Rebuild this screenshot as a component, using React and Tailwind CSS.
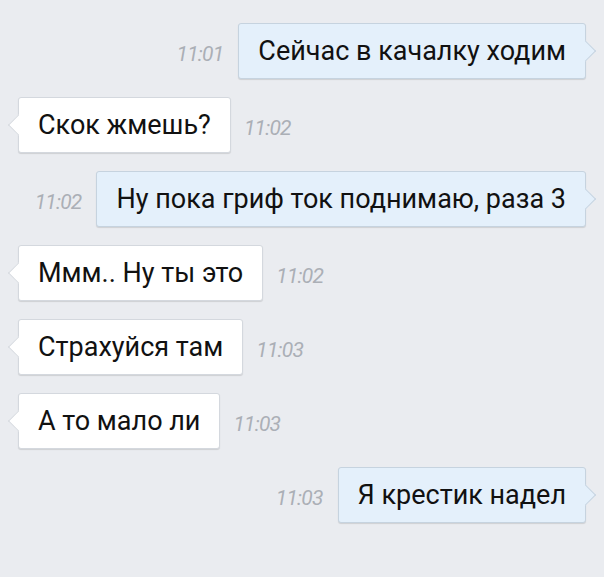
import React from 'react';

const MESSAGES = [
  { out: true, text: 'Сейчас в качалку ходим', time: '11:01' },
  { out: false, text: 'Скок жмешь?', time: '11:02' },
  { out: true, text: 'Ну пока гриф ток поднимаю, раза 3', time: '11:02' },
  { out: false, text: 'Ммм.. Ну ты это', time: '11:02' },
  { out: false, text: 'Страхуйся там', time: '11:03' },
  { out: false, text: 'А то мало ли', time: '11:03' },
  { out: true, text: 'Я крестик надел', time: '11:03' },
];

const Time = ({ children }) => (
  <span className="pt-[7px] text-[21px] italic tracking-[-0.8px] text-[#abafb6]">{children}</span>
);

const Bubble = ({ out, children }) => (
  <div className={`relative h-[56px] flex items-center px-[19px] rounded-[3px] border shadow-[0_1px_1px_rgba(0,0,0,0.12)]
    ${out ? 'bg-[#e4f0fb] border-[#c6d3df]' : 'bg-white border-[#d4d8de]'}`}>
    {/* tail */}
    <span className={`absolute top-1/2 w-[15px] h-[15px] -translate-y-1/2 rotate-45 border
      ${out ? 'right-[-8px] bg-[#e4f0fb] border-[#c6d3df] border-l-0 border-b-0' : 'left-[-8px] bg-white border-[#d4d8de] border-r-0 border-t-0'}`} />
    <span className="relative text-[27px] text-[#111] leading-none">{children}</span>
  </div>
);

export default function App() {
  return (
    <div className="w-[604px] h-[577px] bg-[#eaecf0] pt-[23px] flex flex-col gap-[18px] overflow-hidden"
      style={{ fontFamily: 'Roboto, "Noto Sans", sans-serif' }}>
      {MESSAGES.map((m, i) => m.out ? (
        <div key={i} className="flex items-center justify-end gap-[15px] pr-[18px]">
          <Time>{m.time}</Time>
          <Bubble out>{m.text}</Bubble>
        </div>
      ) : (
        <div key={i} className="flex items-center gap-[13px] pl-[18px]">
          <Bubble>{m.text}</Bubble>
          <Time>{m.time}</Time>
        </div>
      ))}
    </div>
  );
}
